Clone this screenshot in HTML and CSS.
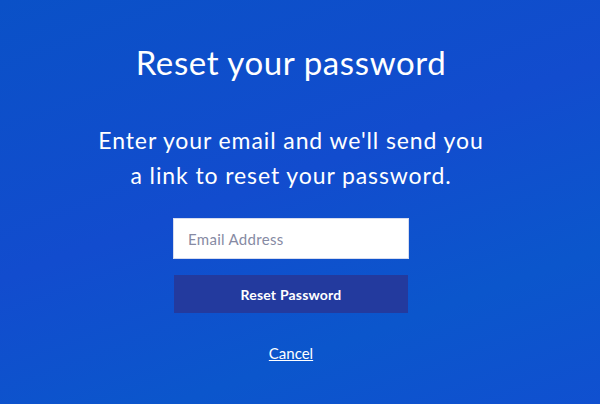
FILE: index.html
```html
<!DOCTYPE html>
<html lang="en">
<head>
    <meta charset="UTF-8">
    <meta name="viewport" content="width=device-width, initial-scale=1.0">
    <title>Reset your password</title>
    <link rel="stylesheet" href="styles.css">
</head>
<body>
    <div class="reset-container">
        <h1>Reset your password</h1>

        <p class="intro">
            Enter your email and we'll send you<br>
            a link to reset your password.
        </p>

        <form class="reset-form">
            <input class="email-input" type="email" placeholder="Email Address">
            <button class="btn-reset" type="button">Reset Password</button>
        </form>

        <a class="cancel-link" href="#">Cancel</a>
    </div>
</body>
</html>
```

FILE: styles.css
```css
* {
    margin: 0;
    padding: 0;
    box-sizing: border-box;
}

html, body {
    height: 100%;
}

body {
    font-family: Lato, "Noto Sans", sans-serif;
    background: linear-gradient(160deg, #0a51c7 0%, #124cce 45%, #0b56cc 75%, #1050d0 100%);
    color: #ffffff;
    overflow: hidden;
}

.reset-container {
    display: flex;
    flex-direction: column;
    align-items: center;
    text-align: center;
    padding-top: 40px;
    padding-right: 18px;
}

h1 {
    font-size: 33px;
    font-weight: 400;
    line-height: 44px;
    letter-spacing: 0.6px;
}

.intro {
    margin-top: 39px;
    font-size: 23px;
    line-height: 35px;
    letter-spacing: 0.9px;
}

.reset-form {
    display: flex;
    flex-direction: column;
    align-items: center;
    gap: 16px;
    margin-top: 25px;
}

.email-input {
    width: 236px;
    height: 41px;
    border: 1px solid #d7dcef;
    background: #ffffff;
    padding: 0 14px;
    font-family: inherit;
    font-size: 15px;
    letter-spacing: 0.3px;
    color: #3a3f55;
    outline: none;
}

.email-input::placeholder {
    color: #868aa3;
}

.btn-reset {
    width: 234px;
    height: 38px;
    border: none;
    background-color: #233a9e;
    color: #ffffff;
    font-family: inherit;
    font-size: 14px;
    font-weight: 700;
    letter-spacing: 0.2px;
    cursor: pointer;
}

.cancel-link {
    margin-top: 31px;
    font-size: 15px;
    line-height: 18px;
    color: #ffffff;
    text-decoration: underline;
}
```
